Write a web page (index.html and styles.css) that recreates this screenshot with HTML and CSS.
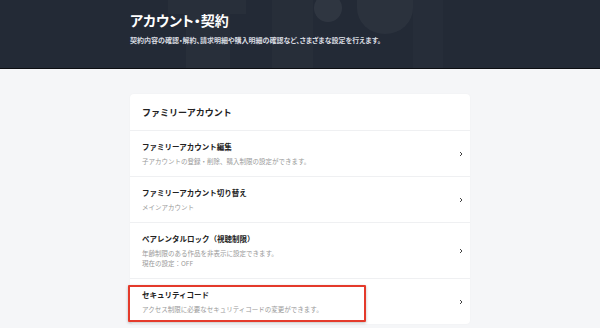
FILE: index.html
```html
<!DOCTYPE html>
<html lang="ja">
<head>
<meta charset="utf-8">
<title>アカウント・契約</title>
<link rel="stylesheet" href="styles.css">
</head>
<body>
<header class="hero">
  <svg class="hero-deco" width="600" height="68" viewBox="0 0 600 68" aria-hidden="true">
    <path d="M168 0 H246 V14 H230 V68 H186 V14 H168 Z" fill="rgba(255,255,255,0.025)"/>
    <rect x="272" y="0" width="41" height="68" fill="rgba(255,255,255,0.02)"/>
    <circle cx="328" cy="8" r="14" fill="rgba(255,255,255,0.06)"/>
    <path d="M357 0 H413 V8 A28 26 0 0 1 357 8 Z" fill="rgba(255,255,255,0.04)"/>
    <rect x="413" y="0" width="30" height="68" fill="rgba(255,255,255,0.015)"/>
  </svg>
  <div class="hero-inner">
    <h1 class="hero-title">アカウント・契約</h1>
    <p class="hero-desc">契約内容の確認・解約、請求明細や購入明細の確認など、さまざまな設定を行えます。</p>
  </div>
</header>
<main class="main">
  <section class="card">
    <h2 class="card-head">ファミリーアカウント</h2>
    <a class="row">
      <div class="row-text">
        <div class="row-title">ファミリーアカウント編集</div>
        <div class="row-sub">子アカウントの登録・削除、購入制限の設定ができます。</div>
      </div>
      <svg class="chev" width="4" height="6" viewBox="0 0 4 6"><path d="M1 1 L3 3 L1 5" fill="none" stroke="#444" stroke-width="1"/></svg>
    </a>
    <a class="row">
      <div class="row-text">
        <div class="row-title">ファミリーアカウント切り替え</div>
        <div class="row-sub">メインアカウント</div>
      </div>
      <svg class="chev" width="4" height="6" viewBox="0 0 4 6"><path d="M1 1 L3 3 L1 5" fill="none" stroke="#444" stroke-width="1"/></svg>
    </a>
    <a class="row">
      <div class="row-text">
        <div class="row-title">ペアレンタルロック（視聴制限）</div>
        <div class="row-sub">年齢制限のある作品を非表示に設定できます。</div>
        <div class="row-sub">現在の設定：OFF</div>
      </div>
      <svg class="chev" width="4" height="6" viewBox="0 0 4 6"><path d="M1 1 L3 3 L1 5" fill="none" stroke="#444" stroke-width="1"/></svg>
    </a>
    <a class="row row-marked">
      <div class="row-text">
        <div class="row-title">セキュリティコード</div>
        <div class="row-sub">アクセス制限に必要なセキュリティコードの変更ができます。</div>
      </div>
      <svg class="chev" width="4" height="6" viewBox="0 0 4 6"><path d="M1 1 L3 3 L1 5" fill="none" stroke="#444" stroke-width="1"/></svg>
      <span class="mark"></span>
    </a>
  </section>
</main>
</body>
</html>
```
FILE: styles.css
```css
* { box-sizing: border-box; }
html, body { margin: 0; padding: 0; }
body {
  width: 600px;
  height: 328px;
  overflow: hidden;
  background: #f5f6f8;
  font-family: "Noto Sans CJK JP", "Noto Sans", sans-serif;
  color: #222;
}
.hero {
  position: relative;
  height: 69px;
  background: #232a36;
  border-bottom: 1px solid #0c0e12;
  overflow: hidden;
  font-feature-settings: "palt";
}
.hero-deco {
  position: absolute;
  left: 0;
  top: 0;
}
.hero-inner {
  position: relative;
  width: 340px;
  margin: 0 auto;
  padding-top: 11px;
}
.hero-title {
  margin: 0;
  font-size: 14px;
  line-height: 18px;
  font-weight: 700;
  color: #fff;
}
.hero-desc {
  margin: 6px 0 0;
  font-size: 7px;
  line-height: 10px;
  font-weight: 700;
  color: #d8dbe0;
}
.main {
  padding-top: 25px;
  display: flex;
  justify-content: center;
}
.card {
  width: 340px;
  background: #fff;
  border-radius: 4px;
  box-shadow: 0 0 2px rgba(0,0,0,0.04);
}
.card-head {
  margin: 0;
  padding: 13px 12px 12px;
  font-size: 9px;
  line-height: 11px;
  font-weight: 700;
  color: #222;
}
.row {
  position: relative;
  display: flex;
  align-items: center;
  padding: 10px 7px 10px 12px;
  border-top: 1px solid #eff0f2;
}
.row-text { flex: 1; }
.row-title {
  font-size: 7.5px;
  line-height: 12px;
  height: 12px;
  font-weight: 700;
  color: #222;
}
.row-sub {
  font-size: 6.5px;
  line-height: 10px;
  height: 10px;
  color: #999;
}
.row-title + .row-sub { margin-top: 3px; }
.chev { display: block; flex: none; }
.mark {
  position: absolute;
  left: -2px;
  top: 6px;
  width: 238px;
  height: 37px;
  border: 2px solid #e43a2b;
  border-radius: 1px;
  box-shadow: 0 1px 3px rgba(0,0,0,0.25);
}
```
